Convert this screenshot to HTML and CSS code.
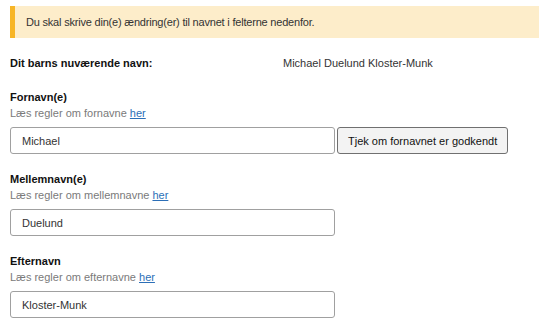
FILE: index.html
```html
<!DOCTYPE html>
<html lang="da">
<head>
  <meta charset="UTF-8">
  <meta name="viewport" content="width=device-width, initial-scale=1.0">
  <title>Navneændring</title>
  <link rel="stylesheet" href="styles.css">
</head>
<body>
  <div class="page">
    <div class="notice">Du skal skrive din(e) ændring(er) til navnet i felterne nedenfor.</div>

    <div class="current-name">
      <div class="current-label">Dit barns nuværende navn:</div>
      <div class="current-value">Michael Duelund Kloster-Munk</div>
    </div>

    <div class="field">
      <label class="field-label" for="first">Fornavn(e)</label>
      <div class="field-help">Læs regler om fornavne <a href="#">her</a></div>
      <div class="field-row">
        <input class="text-input" id="first" type="text" value="Michael">
        <button class="check-btn" type="button">Tjek om fornavnet er godkendt</button>
      </div>
    </div>

    <div class="field">
      <label class="field-label" for="middle">Mellemnavn(e)</label>
      <div class="field-help">Læs regler om mellemnavne <a href="#">her</a></div>
      <div class="field-row">
        <input class="text-input" id="middle" type="text" value="Duelund">
      </div>
    </div>

    <div class="field">
      <label class="field-label" for="last">Efternavn</label>
      <div class="field-help">Læs regler om efternavne <a href="#">her</a></div>
      <div class="field-row">
        <input class="text-input" id="last" type="text" value="Kloster-Munk">
      </div>
    </div>
  </div>
</body>
</html>
```

FILE: styles.css
```css
* {
  box-sizing: border-box;
}
body {
  margin: 0;
  font-family: "Liberation Sans", Arial, sans-serif;
  font-size: 11px;
  line-height: 16px;
  color: #222;
  background: #fff;
}
.page {
  padding: 6px 0 0 10px;
}
.notice {
  background: #fdedca;
  border-left: 5px solid #f7b526;
  padding: 8px 11px;
  height: 32px;
  letter-spacing: -0.2px;
  color: #333;
}
.current-name {
  display: flex;
  margin-top: 17px;
}
.current-label {
  width: 273px;
  font-weight: bold;
  color: #111;
}
.current-value {
  color: #333;
}
.field {
  margin-top: 17px;
}
.current-name + .field {
  margin-top: 18px;
}
.field-label {
  display: block;
  font-weight: bold;
  color: #111;
}
.field-help {
  color: #7a7a7a;
}
.field-help a {
  color: #2c6fb7;
}
.field-row {
  display: flex;
  gap: 2px;
  margin-top: 6px;
}
.text-input {
  width: 325px;
  height: 27px;
  padding: 0 11px;
  border: 1px solid #a0a0a0;
  border-radius: 3px;
  font-family: inherit;
  font-size: 11px;
  color: #333;
}
.check-btn {
  height: 27px;
  padding: 0 10px;
  background: #f3f3f3;
  border: 1px solid #707070;
  border-radius: 3px;
  font-family: inherit;
  font-size: 11px;
  color: #111;
}
```
